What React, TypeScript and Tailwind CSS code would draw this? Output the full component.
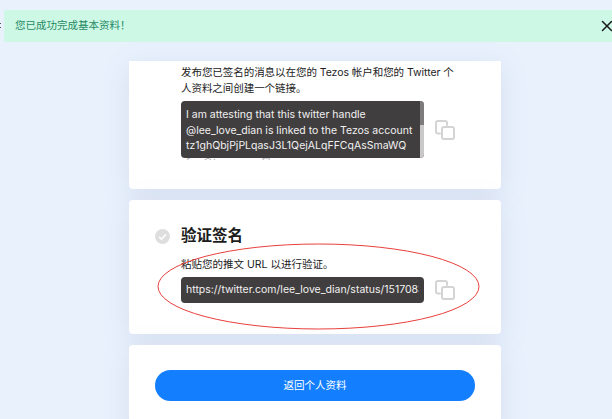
import React from 'react';
import { X } from 'lucide-react';

const CopyIcon = () => (
  <svg width="20" height="20" viewBox="0 0 20 20" fill="none" stroke="#d4d4d4" strokeWidth="2" className="shrink-0">
    <path d="M5 13.5H3a2 2 0 0 1-2-2V3a2 2 0 0 1 2-2h7a2 2 0 0 1 2 2v2" strokeLinecap="round" />
    <rect x="7" y="7" width="12" height="12" rx="2" />
  </svg>
);

const CheckBadge = () => (
  <svg width="15" height="15" viewBox="0 0 15 15" className="shrink-0">
    <circle cx="7.5" cy="7.5" r="7.5" fill="#dedede" />
    <path d="M4 7.8l2.4 2.4 4.5-4.8" fill="none" stroke="#fff" strokeWidth="1.6" />
  </svg>
);

const cardShadow = 'bg-white shadow-[0_6px_28px_rgba(110,130,170,0.15)]';

export default function App() {
  return (
    <div className="relative h-[419px] w-[612px] overflow-hidden bg-[#e9f1fd] font-['Inter','Noto_Sans_CJK_SC',sans-serif]">
      {/* edge of the previous toast */}
      <div className="absolute left-0 top-[23px] flex flex-col gap-[3px]">
        <div className="h-[1px] w-[1px] bg-[#555]" />
        <div className="h-[1px] w-[1px] bg-[#555]" />
      </div>

      {/* success toast */}
      <div className="absolute left-[4px] right-0 top-[10px] z-10 flex h-[32px] items-center justify-between rounded-l-[2px] bg-[#cef8e6] pl-[11px]">
        <span className="text-[10.5px] text-[#1f8a63]">您已成功完成基本资料！</span>
        <X size={18} strokeWidth={2} className="mr-[-4px] text-[#1a1a1a]" />
      </div>

      <div className="ml-[129px] flex w-[372px] flex-col gap-[11px] pt-[61px]">
        <section className={`h-[128px] rounded-b-[4px] pl-[52px] pt-[4px] ${cardShadow}`}>
          <p className="w-[275px] text-[10.5px] leading-[16px] tracking-[-0.05px] text-[#222]">
            发布您已签名的消息以在您的 Tezos 帐户和您的 Twitter 个人资料之间创建一个链接。
          </p>
          <div className="mt-[4px] flex items-start gap-[11px]">
            <div className="w-[243px]">
              <div className="relative h-[57px] overflow-hidden rounded-[4px] bg-[#413e3f] pl-[5px] pr-[12px] pt-[6px] text-[10.5px] leading-[15.5px] text-[#f1f1f1]">
                <p className="whitespace-nowrap">I am attesting that this twitter handle</p>
                <p className="whitespace-nowrap">@lee_love_dian is linked to the Tezos account</p>
                <p className="whitespace-nowrap">tz1ghQbjPjPLqasJ3L1QejALqFFCqAsSmaWQ</p>
                <div className="absolute bottom-0 right-0 top-0 w-[4px] bg-[#c9c9c9]">
                  <div className="h-[24px] bg-[#7d7b7c]" />
                </div>
              </div>
              {/* the tops of the fourth line show under the box */}
              <div className="h-[2px] overflow-hidden pl-[5px] text-[10.5px] leading-[10px] text-[#a8a8a8]">for @tezos_profiles</div>
            </div>
            <div className="pt-[19px]">
              <CopyIcon />
            </div>
          </div>
        </section>

        <section className={`h-[134px] rounded-[4px] px-[26px] pt-[26px] ${cardShadow}`}>
          <div className="flex items-center gap-[11px]">
            <CheckBadge />
            <h2 className="text-[15.5px] font-bold leading-[20px] text-[#1c1c1c]">验证签名</h2>
          </div>
          <p className="ml-[26px] mt-[11px] text-[10.5px] leading-[16px] text-[#222]">粘贴您的推文 URL 以进行验证。</p>
          <div className="ml-[26px] mt-[4px] flex items-center gap-[11px]">
            <div className="h-[26px] w-[243px] rounded-[4px] bg-[#413e3f] px-[5px] text-[10.5px] leading-[26px] text-[#f1f1f1]">
              <div className="overflow-hidden whitespace-nowrap">https://twitter.com/lee_love_dian/status/1517083</div>
            </div>
            <CopyIcon />
          </div>
        </section>

        <section className={`h-[90px] rounded-t-[4px] px-[26px] pt-[25px] ${cardShadow}`}>
          <button className="h-[31px] w-full rounded-full bg-[#147ffe] text-[10.5px] text-white">返回个人资料</button>
        </section>
      </div>

      {/* hand-drawn annotation */}
      <svg className="pointer-events-none absolute left-0 top-0" width="612" height="419" fill="none">
        <ellipse cx="318.5" cy="286.5" rx="160.5" ry="42.5" stroke="#e8403c" strokeWidth="1" />
      </svg>
    </div>
  );
}
